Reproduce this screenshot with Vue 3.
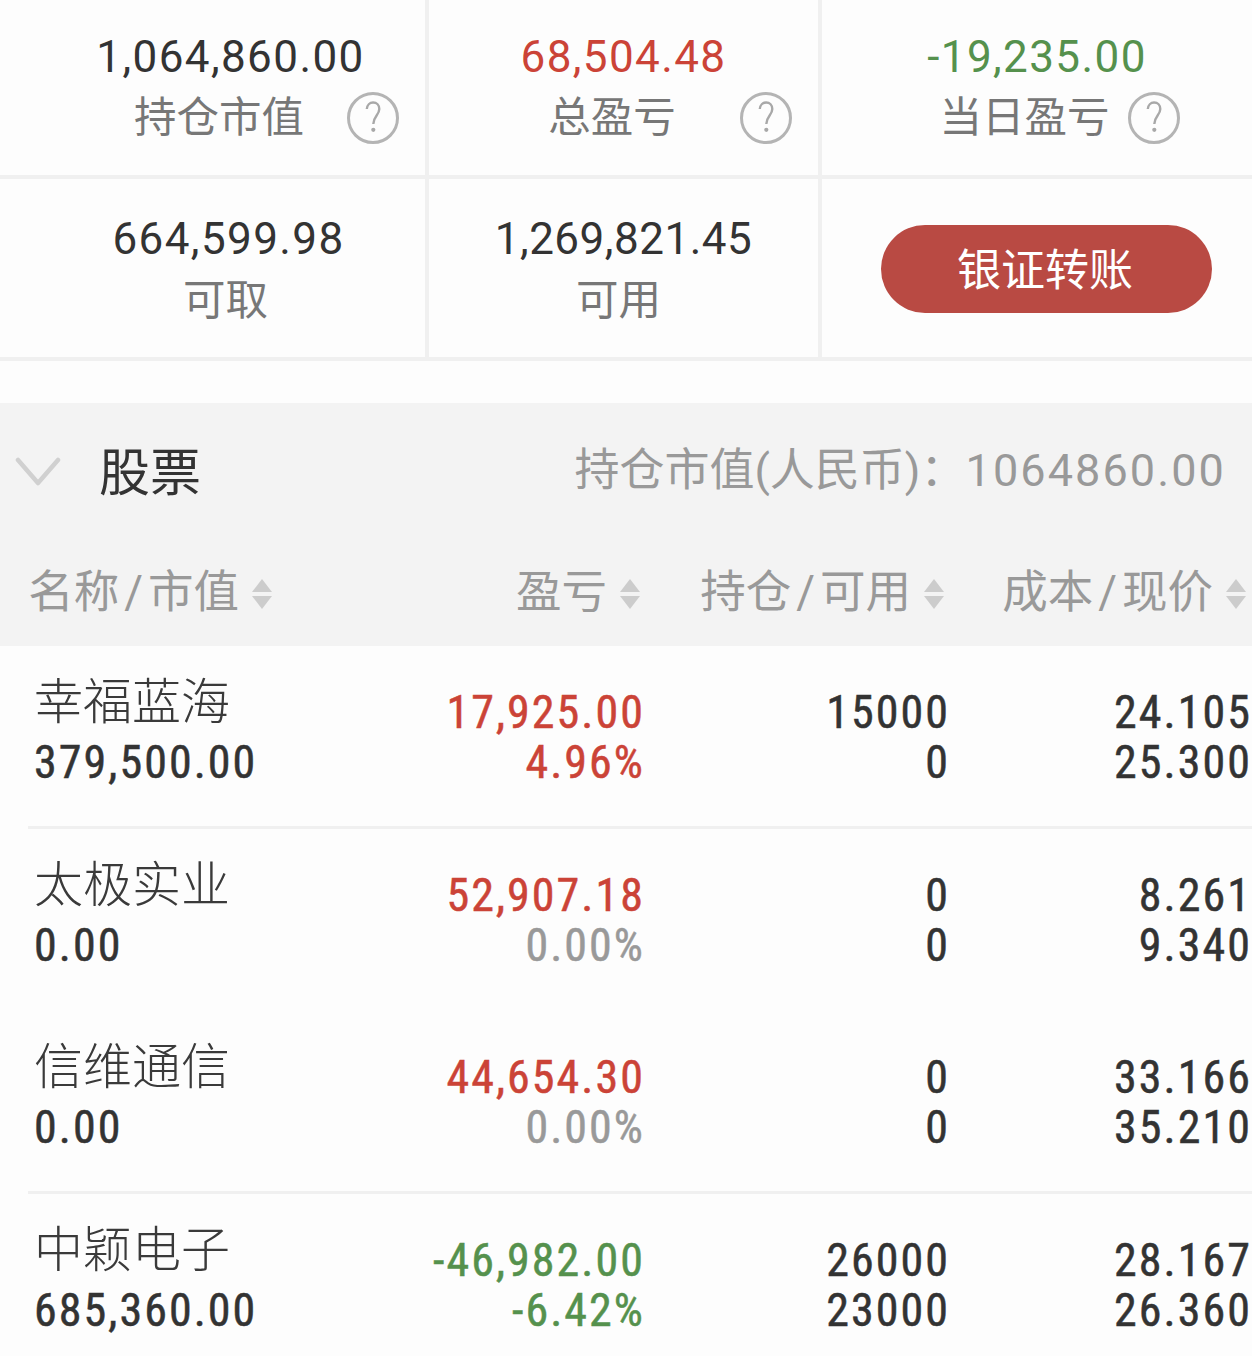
<template>
  <div class="page">
    <div class="summary">
      <div class="summary-row">
        <div class="cell" v-for="item in topCells" :key="item.label">
          <div class="amount" :class="item.tone" :style="{ marginLeft: item.shift + 'px' }">{{ item.value }}</div>
          <div class="caption" :style="{ marginLeft: item.capShift + 'px' }">
            <span :style="{ marginRight: item.gap + 'px' }">{{ item.label }}</span>
            <svg class="help" width="52" height="52" viewBox="0 0 52 52">
              <circle cx="26" cy="26" r="24.5" fill="none" stroke="#b4b4b4" stroke-width="3" />
              <path d="M19.8 17c.3-4 3-6.500 6.300-6.500 3.600 0 6.200 2.700 6.200 6.600 0 6-6 7-6 15" fill="none" stroke="#a8a8a8" stroke-width="2.400" />
              <circle cx="26.300" cy="37.800" r="2.100" fill="#a8a8a8" />
            </svg>
          </div>
        </div>
      </div>
      <div class="summary-row second">
        <div class="cell" v-for="item in bottomCells" :key="item.label">
          <div class="amount" :style="{ marginLeft: item.shift + 'px', letterSpacing: item.spacing + 'px' }">{{ item.value }}</div>
          <div class="caption plain" :style="{ marginLeft: item.capShift + 'px' }">{{ item.label }}</div>
        </div>
        <div class="cell action">
          <button class="transfer" type="button">银证转账</button>
        </div>
      </div>
    </div>

    <div class="stock-head">
      <div class="group-row">
        <svg class="chevron" width="46" height="32" viewBox="0 0 46 32">
          <path d="M3 4l20 23L43 4" fill="none" stroke="#d0d0d0" stroke-width="4.500" stroke-linecap="round" stroke-linejoin="round" />
        </svg>
        <span class="group-name">股票</span>
        <span class="group-total">持仓市值(人民币)：<span class="total-num">1064860.00</span></span>
      </div>
      <div class="columns">
        <div class="col" v-for="(col, i) in columns" :key="col[0]" :class="'c' + i">
          <span>{{ col[0] }}</span>
          <template v-if="col[1]">
            <span class="slash">/</span>
            <span>{{ col[1] }}</span>
          </template>
          <span class="sort"><i class="up"></i><i class="down"></i></span>
        </div>
      </div>
    </div>

    <div class="rows">
      <div class="row" v-for="s in stocks" :key="s.name" :class="{ line: s.line }">
        <div class="c0">
          <div class="name">{{ s.name }}</div>
          <div class="num">{{ s.value }}</div>
        </div>
        <div class="c1 right">
          <div class="num" :class="s.tone">{{ s.profit }}</div>
          <div class="num" :class="s.rateTone">{{ s.rate }}</div>
        </div>
        <div class="c2 right">
          <div class="num">{{ s.hold }}</div>
          <div class="num">{{ s.free }}</div>
        </div>
        <div class="c3 right">
          <div class="num">{{ s.cost }}</div>
          <div class="num">{{ s.price }}</div>
        </div>
      </div>
    </div>
  </div>
</template>

<script setup>
const topCells = [
  { value: '1,064,860.00', label: '持仓市值', tone: '', shift: 36, capShift: 108, gap: 43 },
  { value: '68,504.48', label: '总盈亏', tone: 'red', shift: 0, capShift: 93, gap: 64 },
  { value: '-19,235.00', label: '当日盈亏', tone: 'green', shift: 0, capShift: 45, gap: 18 }
]

const bottomCells = [
  { value: '664,599.98', label: '可取', shift: 32, capShift: 26, spacing: 1.4 },
  { value: '1,269,821.45', label: '可用', shift: 0, capShift: -10, spacing: 0.5 }
]

const columns = [['名称', '市值'], ['盈亏', ''], ['持仓', '可用'], ['成本', '现价']]

const stocks = [
  { name: '幸福蓝海', value: '379,500.00', profit: '17,925.00', rate: '4.96%', tone: 'red', rateTone: 'red', hold: '15000', free: '0', cost: '24.105', price: '25.300', line: true },
  { name: '太极实业', value: '0.00', profit: '52,907.18', rate: '0.00%', tone: 'red', rateTone: 'muted', hold: '0', free: '0', cost: '8.261', price: '9.340', line: false },
  { name: '信维通信', value: '0.00', profit: '44,654.30', rate: '0.00%', tone: 'red', rateTone: 'muted', hold: '0', free: '0', cost: '33.166', price: '35.210', line: true },
  { name: '中颖电子', value: '685,360.00', profit: '-46,982.00', rate: '-6.42%', tone: 'green', rateTone: 'green', hold: '26000', free: '23000', cost: '28.167', price: '26.360', line: false }
]
</script>

<style>
html, body {
  margin: 0;
  background: #fdfdfd;
}
</style>

<style scoped>
.page {
  width: 1252px;
  height: 1356px;
  overflow: hidden;
  background: #fdfdfd;
  font-family: Roboto, "Noto Sans CJK SC", sans-serif;
}
.summary-row {
  display: grid;
  grid-template-columns: 429px 393px 430px;
  height: 179px;
  border-bottom: 4px solid #f0f0f0;
  box-sizing: border-box;
}
.summary-row.second {
  height: 182px;
}
.cell {
  border-right: 4px solid #f0f0f0;
  display: flex;
  flex-direction: column;
  align-items: center;
  padding-top: 33px;
}
.second .cell {
  padding-top: 36px;
}
.cell:last-child {
  border-right: none;
}
.amount {
  font-size: 44px;
  line-height: 48px;
  letter-spacing: 1.400px;
  color: #333;
}
.caption {
  display: flex;
  align-items: center;
  margin-top: 11px;
  font-size: 42.500px;
  line-height: 52px;
  color: #777;
}
.caption.plain {
  display: block;
  margin-top: 12px;
}
.help {
  display: block;
}
.red {
  color: #cb4337;
}
.green {
  color: #55914d;
}
.muted {
  color: #999;
}
.action {
  justify-content: center;
  padding: 0 !important;
}
.transfer {
  width: 331px;
  height: 88px;
  margin-top: 2px;
  margin-left: 19px;
  padding: 0 3px 5px 0;
  border: none;
  border-radius: 44px;
  background: #b94a43;
  color: #fff;
  font-family: inherit;
  font-size: 44px;
}
.stock-head {
  margin-top: 42px;
  height: 243px;
  background: #f3f3f3;
}
.group-row {
  display: flex;
  align-items: center;
  height: 134px;
  padding-right: 26px;
}
.chevron {
  margin-left: 15px;
  margin-top: 4px;
}
.group-name {
  margin-left: 38px;
  margin-bottom: 2px;
  font-size: 51px;
  color: #333;
}
.group-total {
  margin-left: auto;
  margin-bottom: 8px;
  font-size: 45px;
  color: #999;
}
.total-num {
  letter-spacing: 2.100px;
}
.columns {
  display: flex;
  margin-top: 31px;
  font-size: 45.500px;
  line-height: 50px;
  color: #999;
}
.col {
  display: flex;
  align-items: center;
  justify-content: flex-end;
}
.slash {
  margin: 0 5px;
}
.sort {
  display: flex;
  flex-direction: column;
  gap: 4px;
  margin-left: 13px;
  margin-top: 2px;
}
.sort i {
  display: block;
  width: 0;
  height: 0;
  border-left: 10px solid transparent;
  border-right: 10px solid transparent;
}
.sort .up {
  border-bottom: 13px solid #ccc;
}
.sort .down {
  border-top: 13px solid #ccc;
}
.columns .c0 {
  width: 272px;
}
.columns .c1 {
  width: 368px;
}
.columns .c2 {
  width: 304px;
}
.columns .c3 {
  width: 302px;
}
.row {
  display: flex;
  height: 182.670px;
  margin-left: 28px;
  box-sizing: border-box;
  padding-top: 27px;
}
.row.line {
  border-bottom: 3px solid #f0f0f0;
}
.right {
  text-align: right;
}
.row .c0 {
  width: 245px;
  padding-left: 6px;
  box-sizing: border-box;
}
.row .c1 {
  width: 372px;
  margin-top: 14px;
}
.row .c2 {
  width: 305px;
  margin-top: 14px;
}
.row .c3 {
  width: 302px;
  margin-top: 14px;
}
.name {
  font-size: 49px;
  font-weight: 300;
  line-height: 60px;
  color: #3a3a3a;
}
.num {
  font-size: 46px;
  line-height: 50px;
  color: #333;
  font-family: "Roboto Condensed", Roboto, sans-serif;
  letter-spacing: 2.050px;
  -webkit-text-stroke: 0.500px currentColor;
}
.row .c0 .num {
  margin-top: 4px;
}
.row .red.num {
  color: #cb4337;
}
.row .green.num {
  color: #55914d;
}
.row .muted.num {
  color: #999;
}
</style>
